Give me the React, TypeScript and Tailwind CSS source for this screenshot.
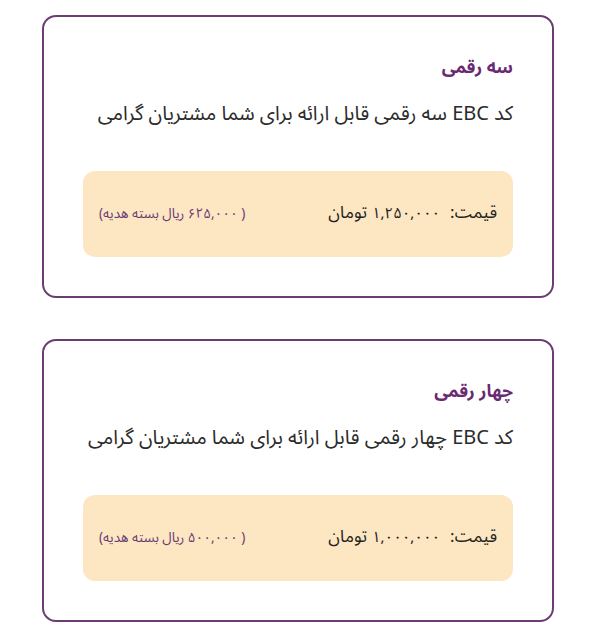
import React from 'react'

interface Plan {
  title: string
  description: string
  price: string
  gift: string
}

const plans: Plan[] = [
  {
    title: 'سه رقمی',
    description: 'کد EBC سه رقمی قابل ارائه برای شما مشتریان گرامی',
    price: '۱,۲۵۰,۰۰۰',
    gift: '( ۶۲۵,۰۰۰ ریال بسته هدیه)'
  },
  {
    title: 'چهار رقمی',
    description: 'کد EBC چهار رقمی قابل ارائه برای شما مشتریان گرامی',
    price: '۱,۰۰۰,۰۰۰',
    gift: '( ۵۰۰,۰۰۰ ریال بسته هدیه)'
  }
]

function PlanCard({ plan }: { plan: Plan }) {
  return (
    <div className="h-[283px] rounded-[14px] border-2 border-[#6b3d72] bg-white px-[39px] pt-[36px]">
      <h3 className="text-[17.5px] font-bold leading-[30px] text-[#6a2a72]">{plan.title}</h3>
      <p className="mt-[16px] text-[20px] leading-[30px] text-[#2b2b2b]">{plan.description}</p>
      <div className="mt-[42px] flex h-[86px] items-center justify-between rounded-[12px] bg-[#fde7c3] px-[16px]">
        <div className="flex items-baseline gap-[10px] text-[17px] text-[#222]">
          <span>قیمت:</span>
          <span className="flex items-baseline gap-[5px]">
            <span className="text-[15px]">{plan.price}</span>
            <span>تومان</span>
          </span>
        </div>
        <span className="text-[13.5px] text-[#6b3a74]">{plan.gift}</span>
      </div>
    </div>
  )
}

export default function App() {
  return (
    <div
      dir="rtl"
      className="min-h-[640px] w-[596px] bg-white px-[42px] pt-[15px]"
      style={{ fontFamily: '"Noto Sans Arabic", Vazirmatn, "DejaVu Sans", sans-serif' }}
    >
      <div className="flex flex-col gap-[41px]">
        {plans.map(plan => (
          <PlanCard key={plan.title} plan={plan} />
        ))}
      </div>
    </div>
  )
}
